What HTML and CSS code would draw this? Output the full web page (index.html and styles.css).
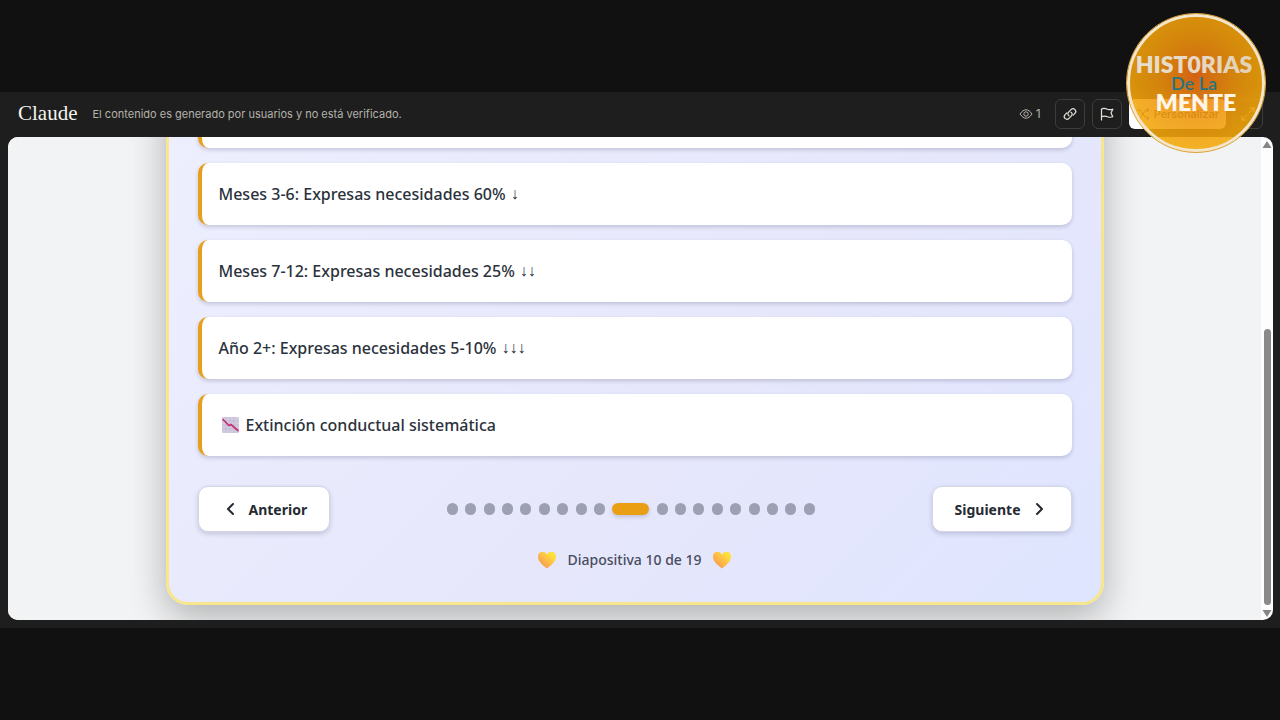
FILE: index.html
```html
<!DOCTYPE html>
<html lang="es">
<head>
  <meta charset="UTF-8" />
  <meta name="viewport" content="width=device-width, initial-scale=1" />
  <title>Claude – Diapositiva 10 de 19</title>
  <link rel="stylesheet" href="styles.css">
</head>
<body>

  <div class="ventana">
    <!-- Barra superior -->
    <header class="barra">
      <a class="marca" href="#">Claude</a>
      <p class="aviso">El contenido es generado por usuarios y no está verificado.</p>
      <span class="vistas">
        <svg width="14" height="12" viewBox="0 0 14 12" fill="none" stroke="currentColor">
          <path d="M1 6C3 3 5 1.800 7 1.800S11 3 13 6C11 9 9 10.200 7 10.200S3 9 1 6Z"/>
          <circle cx="7" cy="6" r="2.200"/>
        </svg>
        1
      </span>
      <button class="icono" aria-label="Copiar enlace">
        <svg width="16" height="16" viewBox="0 0 16 16" fill="none" stroke="currentColor" stroke-width="1.200" stroke-linecap="round">
          <path d="M7 9.800C5.600 8.900 5.500 7.200 6.600 6.100L9 3.700C10.200 2.500 11.900 2.600 13 3.600C14 4.700 14 6.300 12.900 7.400L11.200 9.100"/>
          <path d="M9 6.200C10.400 7.100 10.500 8.800 9.400 9.900L7 12.300C5.800 13.500 4.100 13.400 3 12.400C2 11.300 2 9.700 3.100 8.600L4.800 6.900"/>
        </svg>
      </button>
      <button class="icono" aria-label="Denunciar">
        <svg width="16" height="16" viewBox="0 0 16 16" fill="none" stroke="currentColor" stroke-width="1.200" stroke-linejoin="round" stroke-linecap="round">
          <path d="M2.500 14V3C5 1.600 6.500 2.300 8.500 3.200C10.400 4 11.800 3.900 13.800 3.200L12 7L13.800 10.800C11.800 11.500 10.400 11.500 8.500 10.700C6.500 9.900 5 9.600 2.500 10.700"/>
        </svg>
      </button>
      <button class="personalizar">
        <svg width="14" height="14" viewBox="0 0 14 14" fill="none" stroke="currentColor">
          <path d="M1 3H4L10 11H13M1 11H4L10 3H13M11 1L13 3L11 5M11 9L13 11L11 13"/>
        </svg>
        Personalizar
      </button>
      <button class="icono" aria-label="Pantalla completa">
        <svg width="16" height="16" viewBox="0 0 16 16" fill="none" stroke="currentColor" stroke-linecap="round">
          <path d="M9 7L14 2M10 2H14V6M7 9L2 14M2 10V14H6"/>
        </svg>
      </button>
    </header>

    <!-- Zona con desplazamiento -->
    <div class="marco">
      <main class="lienzo">
        <section class="tarjeta">
          <ul class="lista">
            <li></li>
            <li>Meses 3-6: Expresas necesidades 60% <span class="flecha">↓</span></li>
            <li>Meses 7-12: Expresas necesidades 25% <span class="flecha">↓↓</span></li>
            <li>Año 2+: Expresas necesidades 5-10% <span class="flecha">↓↓↓</span></li>
            <li>
              <svg class="grafico" width="22" height="18" viewBox="0 0 22 18">
                <rect x="3" y="1" width="17" height="16" rx="1" fill="#d3cce0"/>
                <path d="M3 5H20M3 9H20M3 13H20M7 1V17M11 1V17M15 1V17" stroke="#bdb5d0" stroke-width=".7"/>
                <path d="M3.500 3L10 9.500L12 8.500L19.500 15" fill="none" stroke="#c92f72" stroke-width="1.700"/>
              </svg>
              Extinción conductual sistemática
            </li>
          </ul>

          <nav class="navegacion">
            <button class="boton">
              <svg width="18" height="18" viewBox="0 0 18 18"><path d="M12 4L7 9L12 14"/></svg>
              Anterior
            </button>
            <div class="puntos">
              <i></i><i></i><i></i><i></i><i></i><i></i><i></i><i></i><i></i>
              <i class="activo"></i>
              <i></i><i></i><i></i><i></i><i></i><i></i><i></i><i></i><i></i>
            </div>
            <button class="boton">
              Siguiente
              <svg width="18" height="18" viewBox="0 0 18 18"><path d="M6 4L11 9L6 14"/></svg>
            </button>
          </nav>

          <p class="contador">
            <svg width="20" height="18" viewBox="0 0 20 18">
              <defs>
                <linearGradient id="calor" x1="1" y1="0" x2="0" y2="1">
                  <stop offset="0.200" stop-color="#fde03a"/>
                  <stop offset="0.550" stop-color="#fdb84c"/>
                  <stop offset="1" stop-color="#f58a45"/>
                </linearGradient>
              </defs>
              <path fill="url(#calor)" d="M10 17.500C6 14.500 1 10.500 1 5.800C1 2.500 3 .8 5.600 .8C7.800 .8 9.200 2 10 3.700C10.800 2 12.200 .8 14.400 .8C17 .8 19 2.500 19 5.800C19 10.500 14 14.500 10 17.500Z"/>
            </svg>
            Diapositiva 10 de 19
            <svg width="20" height="18" viewBox="0 0 20 18">
              <path fill="url(#calor)" d="M10 17.500C6 14.500 1 10.500 1 5.800C1 2.500 3 .8 5.600 .8C7.800 .8 9.200 2 10 3.700C10.800 2 12.200 .8 14.400 .8C17 .8 19 2.500 19 5.800C19 10.500 14 14.500 10 17.500Z"/>
            </svg>
          </p>
        </section>
      </main>
      <div class="desplazador">
        <svg width="10" height="7" viewBox="0 0 10 7"><path d="M5 0L9.500 7H.5Z"/></svg>
        <span class="pulgar"></span>
        <svg width="10" height="7" viewBox="0 0 10 7"><path d="M5 7L9.500 0H.5Z"/></svg>
      </div>
    </div>
  </div>

  <!-- Logotipo del canal, flota sobre todo -->
  <svg class="logo" width="142" height="142" viewBox="0 0 142 142" role="img" aria-label="Historias de la Mente">
    <defs>
      <radialGradient id="sol" cx=".5" cy=".45" r=".55">
        <stop offset="0" stop-color="#ee6c14"/>
        <stop offset=".5" stop-color="#ee940c"/>
        <stop offset="1" stop-color="#f4aa08"/>
      </radialGradient>
      <linearGradient id="letras">
        <stop offset="0" stop-color="#e8dfd0"/>
        <stop offset="1" stop-color="#e4d2b8"/>
      </linearGradient>
    </defs>
    <circle cx="71" cy="71" r="69" fill="url(#sol)" opacity=".88"/>
    <circle cx="71" cy="71" r="67.500" fill="none" stroke="#f4e6cc" stroke-width="3"/>
    <circle cx="71" cy="71" r="69.500" fill="none" stroke="#dca43a" stroke-width="1"/>
    <text class="logo-grande" x="69" y="61" fill="url(#letras)">HIST0RIAS</text>
    <text class="logo-medio" x="69" y="78">De La</text>
    <text class="logo-grande" x="71" y="99" fill="#fff5e6">MENTE</text>
  </svg>

</body>
</html>
```
FILE: styles.css
```css
/* ---------- Variables de color ---------- */
:root{
  --fondo:#111;
  --barra:#1e1e1e;
  --acento:#e8a01c;
  --texto:#2b323c;
  --punto:#9ca0b2;
}

/* ---------- Estilos base ---------- */
*{box-sizing:border-box}
body{
  margin:0;
  height:100vh;
  padding:92px 0;
  display:flex;
  background:var(--fondo);
  font-family:"Noto Sans","Open Sans",sans-serif;
  color:var(--texto);
}
button{font:inherit;cursor:pointer}
p,ul{margin:0;padding:0}

.ventana{
  flex:1;
  min-width:0;
  display:flex;
  flex-direction:column;
  padding:0 7px 8px 8px;
  background:var(--barra);
}

/* ---------- Barra superior ---------- */
.barra{
  display:flex;
  flex-shrink:0;
  align-items:center;
  height:45px;
  padding:0 10px 2px;
  font-family:Inter,sans-serif;
  color:#d6d4cc;
}
.marca{
  margin-right:15px;
  font:21px "Liberation Serif",serif;
  color:#f5f4ee;
  text-decoration:none;
}
.aviso{
  margin-right:auto;
  font-size:11px;
  color:#b4b2aa;
}
.vistas{
  display:flex;
  align-items:center;
  gap:3px;
  margin-right:14px;
  font-size:12px;
  color:#b4b2aa;
}
.icono{
  display:grid;
  place-items:center;
  width:30px;
  height:30px;
  margin-right:7px;
  padding:0;
  border:1px solid #3c3c3a;
  border-radius:6px;
  background:none;
  color:#e4e2da;
}
.icono:last-child{margin:0}
.personalizar{
  display:flex;
  align-items:center;
  gap:4px;
  height:30px;
  margin-right:7px;
  padding:0 7px;
  border:0;
  border-radius:6px;
  background:#fff;
  font-size:11px;
  font-weight:500;
  color:#333;
}

/* ---------- Marco con la presentación ---------- */
.marco{
  flex:1;
  display:flex;
  min-height:0;
  overflow:hidden;
  border-radius:10px;
  background:#fdfdfd;
}
.lienzo{
  flex:1;
  display:flex;
  flex-direction:column;
  justify-content:flex-end;
  align-items:center;
  padding:0 16px 15px;
  overflow:hidden;
  background:#f2f3f4;
}
.tarjeta{
  flex-shrink:0;
  width:100%;
  max-width:938px;
  padding:60px 29px 30px;
  border:3px solid #f7e68c;
  border-radius:22px;
  background:linear-gradient(135deg,#eeeffe,#e6e7fb 60%,#dfe5ff);
  box-shadow:0 12px 36px rgba(0,0,0,.28);
}

/* ---------- Lista ---------- */
.lista{
  display:flex;
  flex-direction:column;
  gap:15px;
  list-style:none;
}
.lista li{
  display:flex;
  align-items:center;
  gap:5px;
  height:62px;
  padding:0 17px;
  border-left:4px solid var(--acento);
  border-radius:10px;
  background:#fff;
  box-shadow:0 2px 4px rgba(40,40,80,.2);
  font-size:16px;
  font-weight:500;
}
.flecha{
  font-family:"Liberation Sans",sans-serif;
  font-size:16px;
  font-weight:400;
}

/* ---------- Navegación ---------- */
.navegacion{
  display:flex;
  justify-content:space-between;
  align-items:center;
  margin-top:30px;
}
.boton{
  display:flex;
  align-items:center;
  gap:10px;
  height:46px;
  padding:0 22px;
  border:1px solid #d4d6e4;
  border-radius:10px;
  background:#fff;
  box-shadow:0 2px 5px rgba(40,40,80,.2);
  font-size:14px;
  font-weight:700;
  color:#262b33;
}
.boton svg{
  fill:none;
  stroke:currentColor;
  stroke-width:2;
  stroke-linecap:round;
  stroke-linejoin:round;
}
.puntos{
  display:flex;
  justify-content:space-between;
  width:368px;
}
.puntos i{
  width:11px;
  height:12px;
  border-radius:6px;
  background:var(--punto);
}
.puntos .activo{
  width:37px;
  background:#e99e14;
  box-shadow:0 2px 4px rgba(40,40,80,.2);
}
.contador{
  display:flex;
  justify-content:center;
  align-items:center;
  gap:10px;
  margin-top:16px;
  line-height:24px;
  font-size:14px;
  font-weight:500;
  color:#484c60;
}

/* ---------- Barra de desplazamiento ---------- */
.desplazador{
  display:flex;
  flex-direction:column;
  align-items:center;
  gap:5px;
  width:12px;
  padding:4px 0 3px;
  fill:#858585;
}
.pulgar{
  width:7px;
  height:58%;
  margin-top:auto;
  border-radius:4px;
  background:#8a8a8a;
}

/* ---------- Logotipo ---------- */
.logo{
  position:absolute;
  top:12px;
  right:13px;
}
.logo text{
  font-family:Lato,sans-serif;
  text-anchor:middle;
}
.logo .logo-grande{
  font-size:23px;
  font-weight:800;
}
.logo .logo-medio{
  font-size:18px;
  font-weight:600;
  fill:#287482;
}
```
